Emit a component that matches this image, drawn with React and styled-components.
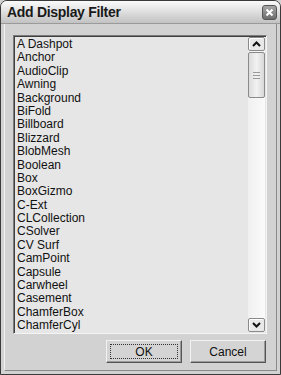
import React from 'react';
import styled, { createGlobalStyle } from 'styled-components';

const GlobalStyle = createGlobalStyle`
  html, body { margin: 0; padding: 0; background: #d2d2d2; }
  * { box-sizing: border-box; }
`;

const items = [
  'A Dashpot', 'Anchor', 'AudioClip', 'Awning', 'Background', 'BiFold',
  'Billboard', 'Blizzard', 'BlobMesh', 'Boolean', 'Box', 'BoxGizmo', 'C-Ext',
  'CLCollection', 'CSolver', 'CV Surf', 'CamPoint', 'Capsule', 'Carwheel',
  'Casement', 'ChamferBox', 'ChamferCyl',
];

const Window = styled.div`
  width: 281px;
  height: 375px;
  display: flex;
  flex-direction: column;
  background: #d2d2d2;
  border: 1px solid #3a3a3a;
  border-radius: 7px 7px 0 0;
  overflow: hidden;
  font-family: "Liberation Sans", Arial, sans-serif;
`;

const TitleBar = styled.div`
  height: 23px;
  display: flex;
  align-items: center;
  justify-content: space-between;
  padding: 0 3px 0 6px;
  background: linear-gradient(to bottom, #fafafa 0%, #e4e4e4 40%, #c2c2c2 100%);
  border-bottom: 1px solid #9a9a9a;
`;

const Title = styled.span`
  font-size: 14px;
  font-weight: bold;
  color: #1a1a1a;
  letter-spacing: -0.3px;
`;

const CloseButton = styled.div`
  width: 15px;
  height: 15px;
  border-radius: 3px;
  background: linear-gradient(to bottom, #a8a8a8, #6c6c6c);
  border: 1px solid #555;
  display: flex;
  align-items: center;
  justify-content: center;
`;

const Body = styled.div`
  flex: 1;
  display: flex;
  flex-direction: column;
  margin: 0 3px 3px;
  border-left: 1px solid #f0f0f0;
  border-right: 1px solid #8a8a8a;
  border-bottom: 1px solid #8a8a8a;
  padding: 11px 9px 0 8px;
`;

const ListBox = styled.div`
  height: 299px;
  display: flex;
  border: 1px solid #7a7a7a;
  border-right-color: #f4f4f4;
  border-bottom-color: #f4f4f4;
  box-shadow: inset 1px 1px 0 #404040;
  background: #e6e6e6;
`;

const List = styled.ul`
  flex: 1;
  margin: 0;
  padding: 2px 0 0 3px;
  list-style: none;
  overflow: hidden;
`;

const Item = styled.li`
  height: 13.4px;
  line-height: 13.4px;
  font-size: 12px;
  color: #111;
  white-space: nowrap;
`;

const ScrollBar = styled.div`
  width: 17px;
  margin: 1px 1px 1px 0;
  display: flex;
  flex-direction: column;
  background: linear-gradient(to right, #f0f0f0, #fafafa);
`;

const ArrowButton = styled.div`
  height: 14px;
  display: flex;
  align-items: center;
  justify-content: center;
  background: #e8e8e8;
  border: 1px solid #8a8a8a;
  border-radius: 2px;
  box-shadow: inset 1px 1px 0 #fff;
`;

const Thumb = styled.div`
  height: 46px;
  margin-top: 1px;
  display: flex;
  align-items: center;
  justify-content: center;
  background: linear-gradient(to right, #dcdcdc, #f2f2f2 50%, #d8d8d8);
  border: 1px solid #8a8a8a;
  border-radius: 2px;
`;

const Grip = styled.div`
  width: 7px;
  height: 7px;
  border-top: 1px solid #9a9a9a;
  border-bottom: 1px solid #9a9a9a;
  position: relative;
  &::after {
    content: '';
    position: absolute;
    left: 0;
    right: 0;
    top: 2px;
    border-top: 1px solid #9a9a9a;
  }
`;

const Track = styled.div`
  flex: 1;
`;

const Buttons = styled.div`
  display: flex;
  justify-content: flex-end;
  gap: 8px;
  margin-top: 6px;
  padding-right: 1px;
`;

const Button = styled.div`
  width: 76px;
  height: 23px;
  display: flex;
  align-items: center;
  justify-content: center;
  font-size: 12px;
  color: #111;
  background: #d4d4d4;
  border: 1px solid #f2f2f2;
  border-right-color: #555;
  border-bottom-color: #555;
  box-shadow: inset -1px -1px 0 #9a9a9a;
  position: relative;
  ${p => p.$focused && `
    &::after {
      content: '';
      position: absolute;
      inset: 3px;
      border: 1px dotted #333;
    }
  `}
`;

const Chevron = ({ up }) => (
  <svg width="9" height="6" viewBox="0 0 9 6">
    <path
      d={up ? 'M1 5 L4.5 1.5 L8 5' : 'M1 1 L4.5 4.5 L8 1'}
      fill="none"
      stroke="#111"
      strokeWidth="2"
    />
  </svg>
);

export default function App() {
  return (
    <>
      <GlobalStyle />
      <Window>
        <TitleBar>
          <Title>Add Display Filter</Title>
          <CloseButton>
            <svg width="9" height="9" viewBox="0 0 9 9">
              <path d="M1.5 1.5 L7.5 7.5 M7.5 1.5 L1.5 7.5" stroke="#fff" strokeWidth="2" />
            </svg>
          </CloseButton>
        </TitleBar>
        <Body>
          <ListBox>
            <List>
              {items.map(name => (
                <Item key={name}>{name}</Item>
              ))}
            </List>
            <ScrollBar>
              <ArrowButton><Chevron up /></ArrowButton>
              <Thumb><Grip /></Thumb>
              <Track />
              <ArrowButton><Chevron /></ArrowButton>
            </ScrollBar>
          </ListBox>
          <Buttons>
            <Button $focused>OK</Button>
            <Button>Cancel</Button>
          </Buttons>
        </Body>
      </Window>
    </>
  );
}
